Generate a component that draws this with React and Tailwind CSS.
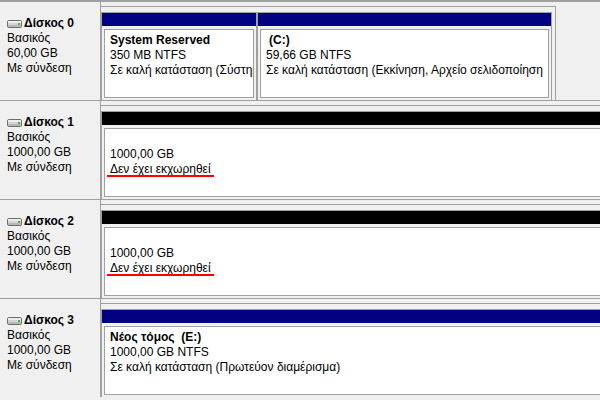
import React from 'react';

const disks = [
  {
    name: 'Δίσκος 0',
    size: '60,00 GB',
    bounded: true,
    partitions: [
      {
        width: 'w-[156px]',
        bar: 'bg-[#000080]',
        title: 'System Reserved',
        lines: ['350 MB NTFS', 'Σε καλή κατάσταση (Σύστημα, Ενεργό, Πρωτεύον διαμέρισμα)'],
      },
      {
        width: 'flex-1',
        bar: 'bg-[#000080]',
        title: '(C:)',
        indent: true,
        lines: ['59,66 GB NTFS', 'Σε καλή κατάσταση (Εκκίνηση, Αρχείο σελιδοποίηση'],
      },
    ],
  },
  {
    name: 'Δίσκος 1',
    size: '1000,00 GB',
    partitions: [
      { width: 'flex-1', bar: 'bg-black', title: '', lines: ['1000,00 GB'], unallocated: true },
    ],
  },
  {
    name: 'Δίσκος 2',
    size: '1000,00 GB',
    partitions: [
      { width: 'flex-1', bar: 'bg-black', title: '', lines: ['1000,00 GB'], unallocated: true },
    ],
  },
  {
    name: 'Δίσκος 3',
    size: '1000,00 GB',
    partitions: [
      {
        width: 'flex-1',
        bar: 'bg-[#000080]',
        title: 'Νέος τόμος  (E:)',
        lines: ['1000,00 GB NTFS', 'Σε καλή κατάσταση (Πρωτεύον διαμέρισμα)'],
      },
    ],
  },
];

const DiskIcon = () => (
  <svg width="15" height="8" viewBox="0 0 15 8" className="shrink-0">
    <rect x="0.5" y="0.5" width="14" height="7" rx="1.5" fill="#d4d4d4" stroke="#6e6e6e" />
    <rect x="1" y="1" width="13" height="2" fill="#ededed" />
    <rect x="1" y="5" width="13" height="2" fill="#b8b8b8" />
    <rect x="11" y="3" width="2" height="2" fill="#39b54a" />
  </svg>
);

const Partition = ({ part }) => (
  <div className={`${part.width} min-w-0 flex flex-col border-t border-l border-r border-[#a0a0a0]`}>
    <div className={`h-[13px] shrink-0 ${part.bar}`} />
    <div className="mx-[2px] mt-[3px] mb-[2px] flex-1 border border-[#a0a0a0] bg-white pl-[5px] pt-[3px] leading-[15px] overflow-hidden whitespace-nowrap">
      <div className={`font-bold h-[15px] whitespace-pre ${part.indent ? 'pl-[3px]' : ''}`}>{part.title}</div>
      {part.lines.map((line) => (
        <div key={line} className="overflow-hidden">{line}</div>
      ))}
      {part.unallocated && (
        <div>
          <span className="relative inline-block">
            Δεν έχει εκχωρηθεί
            <span className="absolute left-[-3px] right-[-3px] top-[13px] h-[2px] bg-[#ff0000]" />
          </span>
        </div>
      )}
    </div>
  </div>
);

const DiskRow = ({ disk }) => (
  <div className="flex h-[99px] border-t border-[#a0a0a0]">
    <div className="w-[101px] shrink-0 border-r border-[#a0a0a0] pl-[7px] pt-[14px] leading-[15px]">
      <div className="flex items-center">
        <DiskIcon />
        <span className="ml-[2px] font-bold">{disk.name}</span>
      </div>
      <div>Βασικός</div>
      <div>{disk.size}</div>
      <div>Με σύνδεση</div>
    </div>
    <div className="flex-1 min-w-0 overflow-hidden pt-[4px]">
      <div
        className={`flex h-full border-t border-[#a0a0a0] pt-[5px] ${
          disk.bounded ? 'w-[455px] border-r pr-[3px]' : 'w-[520px]'
        }`}
      >
        {disk.partitions.map((part, idx) => (
          <Partition key={idx} part={part} />
        ))}
      </div>
    </div>
  </div>
);

export default function App() {
  return (
    <div className="w-[600px] h-[400px] overflow-hidden bg-[#f0f0f0] border-t border-[#a0a0a0] font-['Liberation_Sans',sans-serif] text-[12px] text-black">
      {disks.map((disk) => (
        <DiskRow key={disk.name} disk={disk} />
      ))}
    </div>
  );
}
